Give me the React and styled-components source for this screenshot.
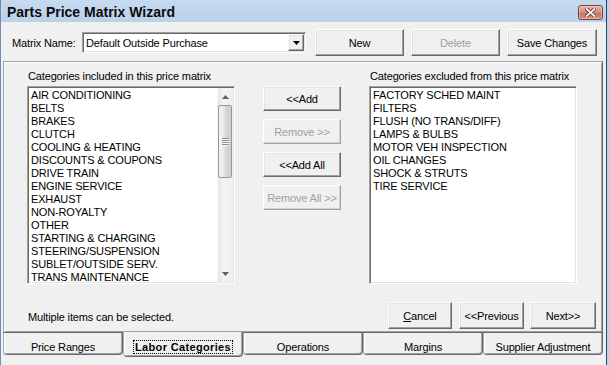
import React from 'react';
import styled, { createGlobalStyle, css } from 'styled-components';

const FONT = `"Liberation Sans", Arial, sans-serif`;

const GlobalStyle = createGlobalStyle`
  html, body { margin: 0; padding: 0; }
  body {
    background: #f0f0f0; width: 609px; height: 365px; overflow: hidden;
    font-family: ${FONT}; font-size: 11px; letter-spacing: -0.15px; color: #000;
  }
  #root { width: 609px; height: 365px; }
  * { box-sizing: border-box; }
`;

const Frame = styled.div`
  width: 609px; height: 365px; display: flex;
  background: #b9d1ec; padding-right: 2px;
`;

const Window = styled.div`
  flex: 1; display: flex; flex-direction: column; background: #f0f0f0;
  border-left: 1px solid #6d8db5; border-right: 1px solid #27496f;
`;

const TitleBar = styled.div`
  height: 22px; flex: none; display: flex; align-items: center; justify-content: space-between;
  padding: 2px 3px 0 6px;
  background: linear-gradient(#c6d9ef, #bbd1ea);
`;

const Title = styled.div`
  font-family: "Liberation Sans", Arial, sans-serif; font-weight: bold; font-size: 14px;
  letter-spacing: 0; line-height: 16px; color: #0b0b0b;
`;

const CloseBtn = styled.div`
  width: 25px; height: 15px; display: flex; align-items: center; justify-content: center;
  border: 1px solid #7a3b33; border-radius: 3px;
  background: linear-gradient(#eab5a8, #d48b7b 50%, #c6705e 51%, #d89585);
  box-shadow: inset 0 0 0 1px rgba(255,255,255,0.35);
`;

const Body = styled.div`
  flex: 1; display: flex; flex-direction: column; padding: 7px 3px 0 2px;
`;

const TopRow = styled.div`
  display: flex; align-items: center; height: 27px; padding-left: 9px;
`;

const FieldLabel = styled.span`
  width: 70px; flex: none; line-height: 13px; white-space: nowrap; padding-top: 1px;
`;

const Sunken = css`
  background: #fff;
  border: 1px solid; border-color: #a0a0a0 #fff #fff #a0a0a0;
  box-shadow: inset 1px 1px 0 #696969, inset -1px -1px 0 #e3e3e3;
`;

const Combo = styled.div`
  ${Sunken};
  width: 224px; height: 21px; margin-right: 9px; flex: none;
  display: flex; align-items: center; padding: 1px 1px 1px 3px;
`;

const ComboText = styled.span`
  flex: 1; line-height: 13px; padding-top: 1px;
`;

const Raised = css`
  background: #f0f0f0;
  border: 1px solid; border-color: #fff #696969 #696969 #fff;
  box-shadow: inset -1px -1px 0 #a0a0a0, inset 1px 1px 0 #e3e3e3;
`;

const DropBtn = styled.div`
  ${Raised};
  width: 16px; height: 17px; display: flex; align-items: center; justify-content: center;
`;

const Button = styled.button`
  ${Raised};
  font-family: ${FONT}; font-size: 11px; letter-spacing: -0.15px; line-height: 13px;
  padding: 1px 0 0; white-space: nowrap;
  width: ${p => p.$w}px; height: ${p => p.$h || 27}px; flex: none;
  color: ${p => (p.disabled ? '#a0a0a0' : '#000')};
  ${p => p.$soft && css`
    border-color: #fff #a0a0a0 #a0a0a0 #fff;
    box-shadow: inset -1px -1px 0 #d4d4d4, inset 1px 1px 0 #f4f4f4;
  `}
`;

const TopButtons = styled.div`
  display: flex; gap: 7px;
`;

const Panel = styled.div`
  margin-top: 5px; height: 272px; flex: none;
  border: 1px solid; border-color: #a0a0a0 #696969 #696969 #a0a0a0;
  box-shadow: inset 1px 1px 0 #fff, inset -1px -1px 0 #a0a0a0;
  padding: 6px 6px 3px 23px;
  display: flex; flex-direction: column;
`;

const Columns = styled.div`
  display: grid;
  grid-template-columns: 208px 78px 208px;
  grid-template-rows: 18px 198px;
  column-gap: 28px;
`;

const ListLabel = styled.div`
  line-height: 13px; padding: 2px 0 0 1px; white-space: nowrap;
`;

const ListBox = styled.div`
  ${Sunken};
  padding: 1px; display: flex; grid-row: 2;
`;

const Items = styled.div`
  flex: 1; padding: 0 0 0 2px;
`;

const Item = styled.div`
  line-height: 13px; height: 13px; white-space: nowrap; padding-top: 1px;
`;

const ScrollBar = styled.div`
  width: 16px; display: flex; flex-direction: column;
  background: linear-gradient(to right, #e8e8e8, #f3f3f3 40%, #efefef);
  border-left: 1px solid #f7f7f7;
`;

const Arrow = styled.div`
  height: 17px; flex: none; display: flex; align-items: center; justify-content: center;
`;

const Thumb = styled.div`
  height: 73px; flex: none; margin: 0 1px 0 0;
  border: 1px solid #979797; border-radius: 2px;
  background: linear-gradient(to right, #f4f4f4, #e6e6e6 45%, #d6d6d6 55%, #cfcfcf);
  display: flex; align-items: center; justify-content: center;
`;

const Track = styled.div`
  flex: 1;
`;

const MidButtons = styled.div`
  grid-row: 2; grid-column: 2; display: flex; flex-direction: column; gap: 8px;
`;

const BottomRow = styled.div`
  margin-top: 18px; height: 27px; display: flex; align-items: center;
`;

const Hint = styled.span`
  flex: 1; padding: 3px 0 0 1px; line-height: 13px;
`;

const BottomButtons = styled.div`
  display: flex; align-items: center;
  & > button + button { margin-left: 7px; }
`;

const TabRow = styled.div`
  display: flex; align-items: flex-start;
`;

const Tab = styled.div`
  width: 120px; flex: none; position: relative; white-space: nowrap;
  height: ${p => (p.$active ? 25 : 22)}px;
  margin-top: ${p => (p.$active ? -1 : 0)}px;
  z-index: ${p => (p.$active ? 1 : 0)};
  background: #f0f0f0;
  border-left: 1px solid #a8a8a8; border-right: 1px solid #696969; border-bottom: 1px solid #696969;
  box-shadow: inset 1px 0 0 #fff, inset -1px -1px 0 #a0a0a0;
  border-radius: 0 0 4px 4px;
  text-align: center; line-height: 13px;
  padding-top: ${p => (p.$active ? 9 : 8)}px;
  font-weight: ${p => (p.$active ? 'bold' : 'normal')};
  letter-spacing: ${p => (p.$active ? '0.35px' : '-0.15px')};
`;

const Focus = styled.span`
  outline: 1px dotted #000; outline-offset: 0; padding: 0 1px;
`;

const Underline = styled.span`
  text-decoration: underline;
`;

const UpTri = () => (
  <svg width="7" height="4" viewBox="0 0 7 4"><path d="M0 4 L3.5 0 L7 4 Z" fill="#606060" /></svg>
);
const DownTri = () => (
  <svg width="7" height="4" viewBox="0 0 7 4"><path d="M0 0 L3.5 4 L7 0 Z" fill="#606060" /></svg>
);
const ComboTri = () => (
  <svg width="7" height="4" viewBox="0 0 7 4"><path d="M0 0 L3.5 4 L7 0 Z" fill="#000" /></svg>
);
const Grip = () => (
  <svg width="7" height="8" viewBox="0 0 7 8">
    {[0, 2, 4, 6].map(y => (
      <g key={y}>
        <rect x="0" y={y} width="7" height="1" fill="#8a8a8a" />
        <rect x="0" y={y + 1} width="7" height="1" fill="#fbfbfb" />
      </g>
    ))}
  </svg>
);
const CloseX = () => (
  <svg width="11" height="9" viewBox="0 0 11 9">
    <path d="M1.5 1 L9.5 8 M9.5 1 L1.5 8" stroke="#5a2a24" strokeWidth="3.4" strokeLinecap="square" />
    <path d="M1.5 1 L9.5 8 M9.5 1 L1.5 8" stroke="#fff" strokeWidth="1.8" strokeLinecap="square" />
  </svg>
);

const included = [
  'AIR CONDITIONING', 'BELTS', 'BRAKES', 'CLUTCH', 'COOLING & HEATING', 'DISCOUNTS & COUPONS',
  'DRIVE TRAIN', 'ENGINE SERVICE', 'EXHAUST', 'NON-ROYALTY', 'OTHER', 'STARTING & CHARGING',
  'STEERING/SUSPENSION', 'SUBLET/OUTSIDE SERV.', 'TRANS MAINTENANCE',
];
const excluded = [
  'FACTORY SCHED MAINT', 'FILTERS', 'FLUSH (NO TRANS/DIFF)', 'LAMPS & BULBS',
  'MOTOR VEH INSPECTION', 'OIL CHANGES', 'SHOCK & STRUTS', 'TIRE SERVICE',
];
const tabs = ['Price Ranges', 'Labor Categories', 'Operations', 'Margins', 'Supplier Adjustment'];

export default function App() {
  return (
    <>
      <GlobalStyle />
      <Frame>
        <Window>
          <TitleBar>
            <Title>Parts Price Matrix Wizard</Title>
            <CloseBtn><CloseX /></CloseBtn>
          </TitleBar>
          <Body>
            <TopRow>
              <FieldLabel>Matrix Name:</FieldLabel>
              <Combo>
                <ComboText>Default Outside Purchase</ComboText>
                <DropBtn><ComboTri /></DropBtn>
              </Combo>
              <TopButtons>
                <Button $w={89}>New</Button>
                <Button $w={89} disabled>Delete</Button>
                <Button $w={90}>Save Changes</Button>
              </TopButtons>
            </TopRow>
            <Panel>
              <Columns>
                <ListLabel>Categories included in this price matrix</ListLabel>
                <div />
                <ListLabel>Categories excluded from this price matrix</ListLabel>
                <ListBox>
                  <Items>
                    {included.map(t => <Item key={t}>{t}</Item>)}
                  </Items>
                  <ScrollBar>
                    <Arrow><UpTri /></Arrow>
                    <Thumb><Grip /></Thumb>
                    <Track />
                    <Arrow><DownTri /></Arrow>
                  </ScrollBar>
                </ListBox>
                <MidButtons>
                  <Button $w={78} $h={25}>&lt;&lt;Add</Button>
                  <Button $w={78} $h={25} $soft disabled>Remove &gt;&gt;</Button>
                  <Button $w={78} $h={25}>&lt;&lt;Add All</Button>
                  <Button $w={78} $h={25} $soft disabled>Remove All &gt;&gt;</Button>
                </MidButtons>
                <ListBox>
                  <Items>
                    {excluded.map(t => <Item key={t}>{t}</Item>)}
                  </Items>
                </ListBox>
              </Columns>
              <BottomRow>
                <Hint>Multiple items can be selected.</Hint>
                <BottomButtons>
                  <Button $w={64}><Underline>C</Underline>ancel</Button>
                  <Button $w={65}>&lt;&lt;Previous</Button>
                  <Button $w={66} style={{ marginLeft: 6 }}>Next&gt;&gt;</Button>
                </BottomButtons>
              </BottomRow>
            </Panel>
            <TabRow>
              {tabs.map(t => (
                <Tab key={t} $active={t === 'Labor Categories'}>
                  {t === 'Labor Categories' ? <Focus>{t}</Focus> : t}
                </Tab>
              ))}
            </TabRow>
          </Body>
        </Window>
      </Frame>
    </>
  );
}
